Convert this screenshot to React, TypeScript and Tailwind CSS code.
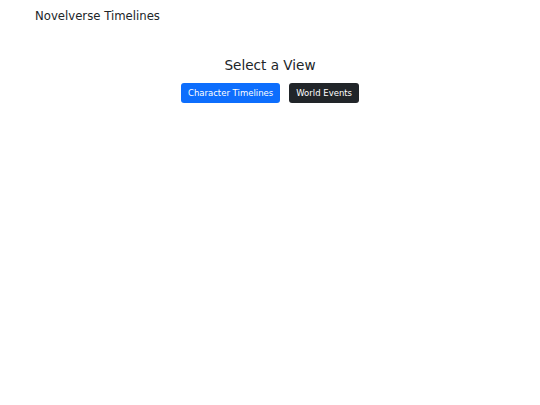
export default function App() {
  return (
    <div className="min-h-[405px] bg-white text-[#212529]" style={{ fontFamily: '"DejaVu Sans", sans-serif' }}>
      <div className="px-[35px] pt-[8px] text-[11.7px] leading-[16px]">Novelverse Timelines</div>
      <div className="mt-[32px] flex flex-col items-center">
        <h2 className="text-[13.6px] leading-[18px]">Select a View</h2>
        <div className="mt-[9px] flex gap-[9px]">
          <button className="h-[20px] rounded-[3px] bg-[#0d6efd] px-[7px] text-[8.5px] text-white">Character Timelines</button>
          <button className="h-[20px] rounded-[3px] bg-[#212529] px-[7px] text-[8.5px] text-white">World Events</button>
        </div>
      </div>
    </div>
  );
}
